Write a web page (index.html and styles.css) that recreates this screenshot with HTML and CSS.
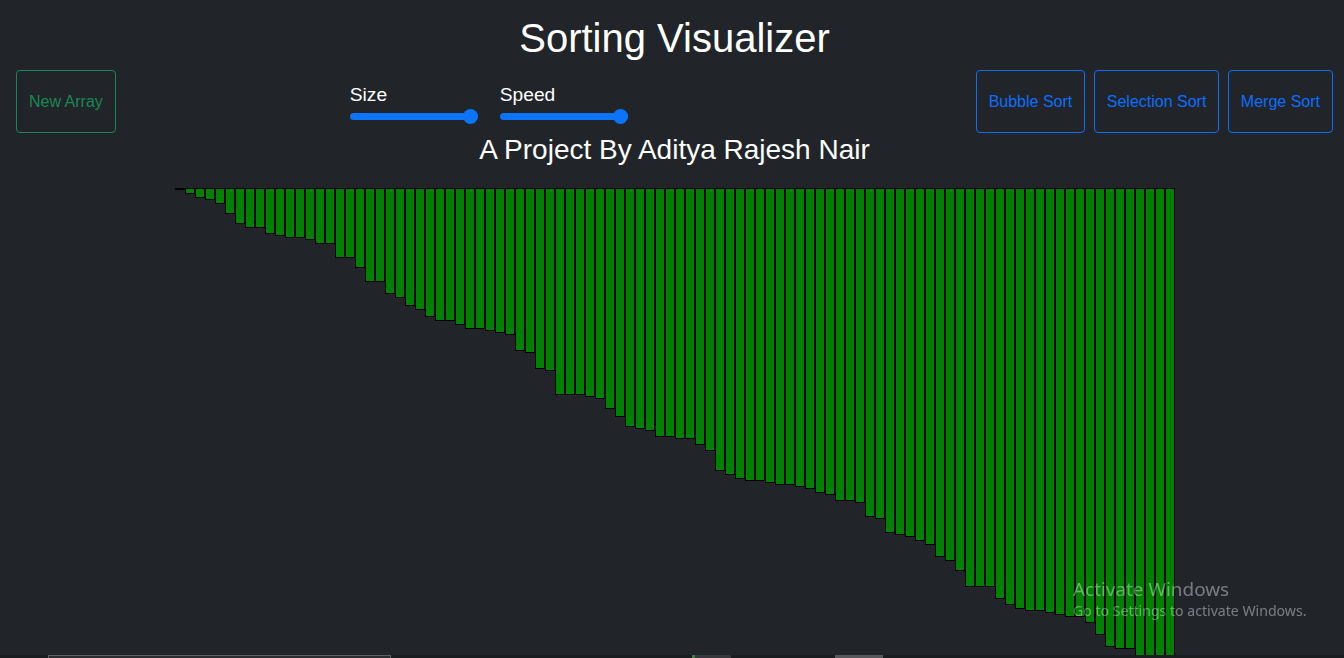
FILE: index.html
```html
<!DOCTYPE html>
<html lang="en">
<head>
<meta charset="utf-8">
<title>Sorting Visualizer</title>
<link rel="stylesheet" href="styles.css">
</head>
<body>
<div class="page">
  <h1 class="title">Sorting Visualizer</h1>
  <nav class="toolbar">
    <button class="btn btn-green">New Array</button>
    <div class="sliders">
      <label class="slider">
        <span class="slider-label">Size</span>
        <input class="range" type="range" min="5" max="100" value="100">
      </label>
      <label class="slider">
        <span class="slider-label">Speed</span>
        <input class="range" type="range" min="1" max="100" value="100">
      </label>
    </div>
    <div class="algos">
      <button class="btn btn-blue">Bubble Sort</button>
      <button class="btn btn-blue">Selection Sort</button>
      <button class="btn btn-blue">Merge Sort</button>
    </div>
  </nav>
  <h2 class="subtitle">A Project By Aditya Rajesh Nair</h2>
  <div class="bars">
    <div class="bar" style="height:2px"></div>
    <div class="bar" style="height:6px"></div>
    <div class="bar" style="height:10px"></div>
    <div class="bar" style="height:12px"></div>
    <div class="bar" style="height:16px"></div>
    <div class="bar" style="height:26px"></div>
    <div class="bar" style="height:36px"></div>
    <div class="bar" style="height:40px"></div>
    <div class="bar" style="height:40px"></div>
    <div class="bar" style="height:46px"></div>
    <div class="bar" style="height:48px"></div>
    <div class="bar" style="height:50px"></div>
    <div class="bar" style="height:50px"></div>
    <div class="bar" style="height:52px"></div>
    <div class="bar" style="height:56px"></div>
    <div class="bar" style="height:56px"></div>
    <div class="bar" style="height:70px"></div>
    <div class="bar" style="height:70px"></div>
    <div class="bar" style="height:80px"></div>
    <div class="bar" style="height:94px"></div>
    <div class="bar" style="height:94px"></div>
    <div class="bar" style="height:106px"></div>
    <div class="bar" style="height:110px"></div>
    <div class="bar" style="height:118px"></div>
    <div class="bar" style="height:122px"></div>
    <div class="bar" style="height:129px"></div>
    <div class="bar" style="height:133px"></div>
    <div class="bar" style="height:133px"></div>
    <div class="bar" style="height:137px"></div>
    <div class="bar" style="height:141px"></div>
    <div class="bar" style="height:141px"></div>
    <div class="bar" style="height:143px"></div>
    <div class="bar" style="height:145px"></div>
    <div class="bar" style="height:147px"></div>
    <div class="bar" style="height:163px"></div>
    <div class="bar" style="height:165px"></div>
    <div class="bar" style="height:181px"></div>
    <div class="bar" style="height:183px"></div>
    <div class="bar" style="height:207px"></div>
    <div class="bar" style="height:207px"></div>
    <div class="bar" style="height:207px"></div>
    <div class="bar" style="height:209px"></div>
    <div class="bar" style="height:211px"></div>
    <div class="bar" style="height:221px"></div>
    <div class="bar" style="height:229px"></div>
    <div class="bar" style="height:239px"></div>
    <div class="bar" style="height:241px"></div>
    <div class="bar" style="height:243px"></div>
    <div class="bar" style="height:249px"></div>
    <div class="bar" style="height:249px"></div>
    <div class="bar" style="height:251px"></div>
    <div class="bar" style="height:251px"></div>
    <div class="bar" style="height:257px"></div>
    <div class="bar" style="height:263px"></div>
    <div class="bar" style="height:283px"></div>
    <div class="bar" style="height:287px"></div>
    <div class="bar" style="height:291px"></div>
    <div class="bar" style="height:293px"></div>
    <div class="bar" style="height:293px"></div>
    <div class="bar" style="height:295px"></div>
    <div class="bar" style="height:297px"></div>
    <div class="bar" style="height:297px"></div>
    <div class="bar" style="height:299px"></div>
    <div class="bar" style="height:301px"></div>
    <div class="bar" style="height:305px"></div>
    <div class="bar" style="height:307px"></div>
    <div class="bar" style="height:313px"></div>
    <div class="bar" style="height:313px"></div>
    <div class="bar" style="height:315px"></div>
    <div class="bar" style="height:329px"></div>
    <div class="bar" style="height:331px"></div>
    <div class="bar" style="height:345px"></div>
    <div class="bar" style="height:347px"></div>
    <div class="bar" style="height:349px"></div>
    <div class="bar" style="height:353px"></div>
    <div class="bar" style="height:357px"></div>
    <div class="bar" style="height:369px"></div>
    <div class="bar" style="height:373px"></div>
    <div class="bar" style="height:383px"></div>
    <div class="bar" style="height:399px"></div>
    <div class="bar" style="height:399px"></div>
    <div class="bar" style="height:399px"></div>
    <div class="bar" style="height:411px"></div>
    <div class="bar" style="height:417px"></div>
    <div class="bar" style="height:421px"></div>
    <div class="bar" style="height:423px"></div>
    <div class="bar" style="height:423px"></div>
    <div class="bar" style="height:425px"></div>
    <div class="bar" style="height:427px"></div>
    <div class="bar" style="height:429px"></div>
    <div class="bar" style="height:429px"></div>
    <div class="bar" style="height:435px"></div>
    <div class="bar" style="height:447px"></div>
    <div class="bar" style="height:459px"></div>
    <div class="bar" style="height:461px"></div>
    <div class="bar" style="height:461px"></div>
    <div class="bar" style="height:470px"></div>
    <div class="bar" style="height:470px"></div>
    <div class="bar" style="height:470px"></div>
    <div class="bar" style="height:470px"></div>
  </div>
</div>
<div class="watermark">
  <div class="wm-title">Activate Windows</div>
  <div class="wm-sub">Go to Settings to activate Windows.</div>
</div>
<div class="taskstrip">
  <span class="ts-box"></span>
  <span class="ts-green"></span>
  <span class="ts-dark"></span>
  <span class="ts-gray"></span>
</div>
</body>
</html>
```

FILE: styles.css
```css
html, body {
  margin: 0;
  padding: 0;
  background: #212529;
  overflow: hidden;
  height: 658px;
}

body {
  font-family: "Liberation Sans", Arial, sans-serif;
  color: #ffffff;
}

.page {
  padding: 0 11px 0 16px;
}

.title {
  margin: 14px 0 0;
  font-size: 40px;
  line-height: 48px;
  font-weight: 400;
  text-align: center;
}

.toolbar {
  display: flex;
  align-items: center;
  margin-top: 8px;
  height: 63px;
}

.btn {
  box-sizing: border-box;
  height: 63px;
  padding: 0 12px;
  background: transparent;
  border: 1px solid;
  border-radius: 4px;
  font-family: "Liberation Sans", Arial, sans-serif;
  font-size: 16px;
  line-height: 24px;
}

.btn-green {
  color: #198754;
  border-color: #198754;
}

.btn-blue {
  color: #0d6efd;
  border-color: #0d6efd;
}

.sliders {
  display: flex;
  gap: 22px;
  margin-left: 234px;
  padding-top: 3px;
}

.slider {
  display: flex;
  flex-direction: column;
  gap: 4px;
}

.slider-label {
  font-size: 19.2px;
  line-height: 23px;
  color: #ffffff;
}

.range {
  -webkit-appearance: none;
  appearance: none;
  margin: 0;
  width: 128px;
  height: 14px;
  background: transparent;
}

.range::-webkit-slider-runnable-track {
  height: 7px;
  border-radius: 4px;
  background: #0b74f8;
}

.range::-webkit-slider-thumb {
  -webkit-appearance: none;
  appearance: none;
  width: 15px;
  height: 15px;
  border-radius: 50%;
  background: #0b74f8;
  margin-top: -4px;
}

.algos {
  display: flex;
  gap: 8.5px;
  margin-left: auto;
  padding-left: 1px;
}

.subtitle {
  margin: 0;
  font-size: 28px;
  line-height: 34px;
  font-weight: 400;
  text-align: center;
}

.bars {
  display: flex;
  align-items: flex-start;
  width: 1000px;
  margin: 21px auto 0;
}

.bar {
  box-sizing: border-box;
  width: 10px;
  background: #008000;
  border: 1px solid #000000;
}

.watermark {
  position: fixed;
  left: 1073px;
  top: 577px;
  font-family: "Noto Sans", "Open Sans", sans-serif;
  color: rgba(255, 255, 255, 0.4);
}

.wm-title {
  font-size: 18.9px;
  line-height: 24px;
}

.wm-sub {
  font-size: 14.1px;
  line-height: 20px;
}

.taskstrip {
  position: fixed;
  left: 0;
  right: 0;
  bottom: 0;
  height: 3px;
  background: #1a1d20;
  display: flex;
  align-items: flex-end;
}

.ts-box {
  box-sizing: border-box;
  margin-left: 48px;
  width: 343px;
  height: 3px;
  border: 1px solid #5f6163;
  border-bottom: none;
  background: #2b2d30;
}

.ts-green {
  margin-left: 301px;
  width: 3px;
  height: 3px;
  background: #3e7b3e;
}

.ts-dark {
  width: 36px;
  height: 3px;
  background: #36383b;
}

.ts-gray {
  margin-left: 104px;
  width: 48px;
  height: 3px;
  background: #56585b;
}
```
